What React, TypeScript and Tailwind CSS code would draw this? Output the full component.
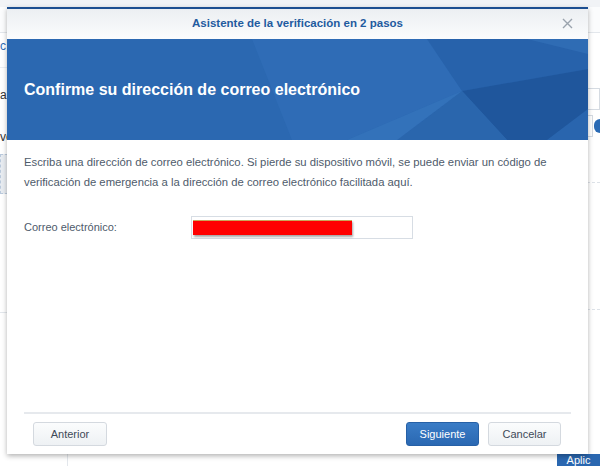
import React from "react";

function BannerFacets() {
  return (
    <svg
      className="absolute inset-0 h-full w-full"
      viewBox="0 0 581 101"
      preserveAspectRatio="none"
    >
      <polygon points="245,0 420,0 455,52 340,101 285,101" fill="#3676bf" opacity="0.35" />
      <polygon points="420,0 581,0 581,30 455,52" fill="#2660a8" opacity="0.7" />
      <polygon points="455,52 581,30 581,101 500,101" fill="#1d5499" opacity="0.85" />
      <polygon points="455,52 500,101 390,101" fill="#2a66ad" opacity="0.9" />
      <polygon points="340,101 455,52 390,101" fill="#3b7cc4" opacity="0.5" />
      <polygon points="520,0 581,0 581,15" fill="#3775bd" opacity="0.5" />
      <polygon points="540,101 581,70 581,101" fill="#2d6cb6" opacity="0.7" />
    </svg>
  );
}

export default function App() {
  return (
    <div className="relative h-[466px] w-[600px] overflow-hidden bg-white font-['Liberation_Sans',Arial,sans-serif]">
      {/* underlying page */}
      <div className="flex h-full flex-col">
        <div className="h-[7px] bg-[#f1f3f6]" />
        <div className="h-[26px] border-b border-[#e3e7ec] bg-[#fbfcfd]" />
        <div className="flex flex-1">
          <div className="flex w-[68px] flex-col border-r border-[#e3e7ec] bg-white">
            <div className="pt-[6px] text-[12px] leading-[14px] text-[#2a6ab4]">c</div>
            <div className="mt-[14px] border-t border-[#eceff3] pt-[20px] text-[12px] leading-[14px] text-[#333]">a</div>
            <div className="mt-[28px] text-[12px] leading-[14px] text-[#333]">vo</div>
            <div className="mt-[10px] h-[40px] border border-dashed border-[#b9c9dc] bg-[#e8ecf1]" />
            <div className="mt-[118px] border-t border-[#e3e7ec]" />
          </div>
          <div className="flex flex-1 flex-col items-end">
            <div className="mt-[55px] h-[22px] w-[20px] border border-[#d5dbe2]" />
            <div className="mt-[5px] flex items-center">
              <div className="h-[22px] w-[20px] border border-[#d5dbe2]" />
              <div className="ml-[1px] h-[14px] w-[6px] rounded-l-full bg-[#2a6ab4]" />
            </div>
            <div className="mt-[45px] w-full border-t border-dashed border-[#dde2e8]" />
            <div className="mt-[126px] w-full border-t border-dashed border-[#dde2e8]" />
            <div className="mt-auto flex h-[12px] w-[43px] items-end justify-center bg-[#2a67b0] text-[11px] leading-[11px] text-white">
              Aplic
            </div>
          </div>
        </div>
      </div>

      {/* dialog window */}
      <div className="absolute left-[7px] top-[7px] flex h-[447px] w-[581px] flex-col border-t-[2px] border-[#1d4f91] bg-white shadow-[0_2px_5px_rgba(0,0,0,0.3)]">
        <div className="relative flex h-[30px] items-center justify-center bg-gradient-to-b from-[#eceff2] to-[#fbfcfd]">
          <span className="text-[11.5px] font-bold text-[#1f5b9f]">
            Asistente de la verificación en 2 pasos
          </span>
          <svg
            className="absolute right-[15px] top-[9px]"
            width="11"
            height="11"
            viewBox="0 0 11 11"
          >
            <path d="M1 1 L10 10 M10 1 L1 10" stroke="#9aa3ad" strokeWidth="1.4" />
          </svg>
        </div>

        <div className="relative flex h-[101px] items-center bg-[#2b68b1] pl-[17px]">
          <BannerFacets />
          <h1 className="relative text-[16px] font-bold text-white">
            Confirme su dirección de correo electrónico
          </h1>
        </div>

        <div className="flex flex-1 flex-col px-[17px] pt-[12px]">
          <p className="text-[11.3px] leading-[20px] text-[#4e5b6b]">
            Escriba una dirección de correo electrónico. Si pierde su dispositivo móvil, se puede enviar un código de
            verificación de emergencia a la dirección de correo electrónico facilitada aquí.
          </p>
          <div className="mt-[24px] flex items-center">
            <label className="w-[167px] text-[11px] text-[#4e5b6b]">Correo electrónico:</label>
            <div className="flex h-[23px] w-[222px] items-center border border-[#d7dde4] bg-white pl-[1px]">
              <div className="h-[15px] w-[159px] border-t border-[#c9a65a] bg-[#ff0000] shadow-[1px_2px_2px_rgba(0,0,0,0.35)]" />
            </div>
          </div>
          <div className="flex-1" />
          <div className="h-[2px] bg-[#e6e9ed]" />
          <div className="flex items-center pb-[8px] pl-[9px] pr-[10px] pt-[8px]">
            <button className="h-[24px] w-[74px] rounded-[3px] border border-[#d4d9df] bg-gradient-to-b from-[#fbfcfd] to-[#eef1f4] text-[11px] text-[#3e4a58]">
              Anterior
            </button>
            <div className="flex-1" />
            <button className="h-[24px] w-[73px] rounded-[3px] border border-[#2660a6] bg-gradient-to-b from-[#3a7cc6] to-[#2a68b2] text-[11px] text-white">
              Siguiente
            </button>
            <button className="ml-[9px] h-[24px] w-[73px] rounded-[3px] border border-[#d4d9df] bg-gradient-to-b from-[#fbfcfd] to-[#eef1f4] text-[11px] text-[#3e4a58]">
              Cancelar
            </button>
          </div>
        </div>
      </div>
    </div>
  );
}
